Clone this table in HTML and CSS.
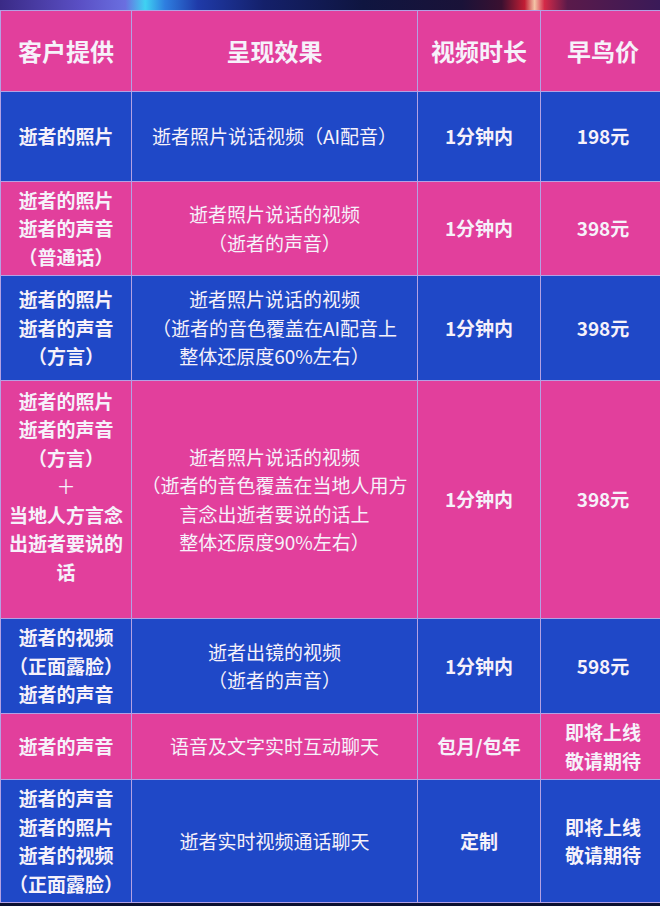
FILE: index.html
```html
<!DOCTYPE html>
<html lang="zh-CN">
<head>
<meta charset="utf-8">
<title>价格表</title>
<link rel="stylesheet" href="styles.css">
</head>
<body>
<div class="page">
  <div class="banner"></div>
  <div class="price-table">
    <div class="row pink head">
      <div class="cell"><div>客户提供</div></div>
      <div class="cell"><div>呈现效果</div></div>
      <div class="cell"><div>视频时长</div></div>
      <div class="cell"><div>早鸟价</div></div>
    </div>
    <div class="row blue">
      <div class="cell strong"><div>逝者的照片</div></div>
      <div class="cell"><div>逝者照片说话视频（AI配音）</div></div>
      <div class="cell strong"><div>1分钟内</div></div>
      <div class="cell strong"><div>198元</div></div>
    </div>
    <div class="row pink">
      <div class="cell strong"><div>逝者的照片<br>逝者的声音<br>（普通话）</div></div>
      <div class="cell"><div>逝者照片说话的视频<br>（逝者的声音）</div></div>
      <div class="cell strong"><div>1分钟内</div></div>
      <div class="cell strong"><div>398元</div></div>
    </div>
    <div class="row blue">
      <div class="cell strong"><div>逝者的照片<br>逝者的声音<br>（方言）</div></div>
      <div class="cell"><div>逝者照片说话的视频<br>（逝者的音色覆盖在AI配音上<br>整体还原度60%左右）</div></div>
      <div class="cell strong"><div>1分钟内</div></div>
      <div class="cell strong"><div>398元</div></div>
    </div>
    <div class="row pink">
      <div class="cell strong raised"><div>逝者的照片<br>逝者的声音<br>（方言）<br><span class="plus">＋</span><br>当地人方言念<br>出逝者要说的<br>话</div></div>
      <div class="cell"><div>逝者照片说话的视频<br>（逝者的音色覆盖在当地人用方<br>言念出逝者要说的话上<br>整体还原度90%左右）</div></div>
      <div class="cell strong"><div>1分钟内</div></div>
      <div class="cell strong"><div>398元</div></div>
    </div>
    <div class="row blue">
      <div class="cell strong"><div>逝者的视频<br>（正面露脸）<br>逝者的声音</div></div>
      <div class="cell"><div>逝者出镜的视频<br>（逝者的声音）</div></div>
      <div class="cell strong"><div>1分钟内</div></div>
      <div class="cell strong"><div>598元</div></div>
    </div>
    <div class="row pink">
      <div class="cell strong"><div>逝者的声音</div></div>
      <div class="cell"><div>语音及文字实时互动聊天</div></div>
      <div class="cell strong"><div>包月/包年</div></div>
      <div class="cell strong"><div>即将上线<br>敬请期待</div></div>
    </div>
    <div class="row blue">
      <div class="cell strong"><div>逝者的声音<br>逝者的照片<br>逝者的视频<br>（正面露脸）</div></div>
      <div class="cell"><div>逝者实时视频通话聊天</div></div>
      <div class="cell strong"><div>定制</div></div>
      <div class="cell strong"><div>即将上线<br>敬请期待</div></div>
    </div>
  </div>
</div>
</body>
</html>
```

FILE: styles.css
```css
html, body {
  margin: 0;
  padding: 0;
  overflow: hidden;
  background: #0b1030;
}

.page {
  width: 660px;
  height: 906px;
  overflow: hidden;
  font-family: "Noto Sans CJK SC", "Noto Sans", sans-serif;
  color: #f6f1fa;
}

.banner {
  height: 10px;
  background: linear-gradient(90deg,
    #3a2a86 0%,
    #5a4fc4 12%,
    #6a6fe0 19%,
    #3fd2f2 22%,
    #2e7ee0 25%,
    #1f3aa8 30%,
    #14206a 40%,
    #0f1540 55%,
    #1a1238 70%,
    #3a1030 76%,
    #c21e34 79.5%,
    #f3c4a6 81%,
    #d42a48 82.5%,
    #5a1a4a 86%,
    #3a1a58 100%);
}

.price-table {
  display: grid;
  grid-template-columns: 130px 285px 122px 124px;
  grid-template-rows: 80px 89px 93px 104px 237px 94px 65px 122px;
  gap: 1px;
  padding: 1px;
  width: max-content;
  background: #b3a1e4;
}

.row {
  display: contents;
}

.cell {
  display: flex;
  align-items: center;
  justify-content: center;
  text-align: center;
  font-size: 19px;
  line-height: 28.5px;
  font-weight: 400;
}

.row.pink > .cell {
  background: #e23f9c;
}

.row.blue > .cell {
  background: #1f48c7;
}

.strong {
  font-size: 19px;
  font-weight: 700;
}

.head > .cell {
  font-size: 24px;
  font-weight: 700;
}

.raised {
  padding-bottom: 26px;
}

.plus {
  font-weight: 400;
}
```
